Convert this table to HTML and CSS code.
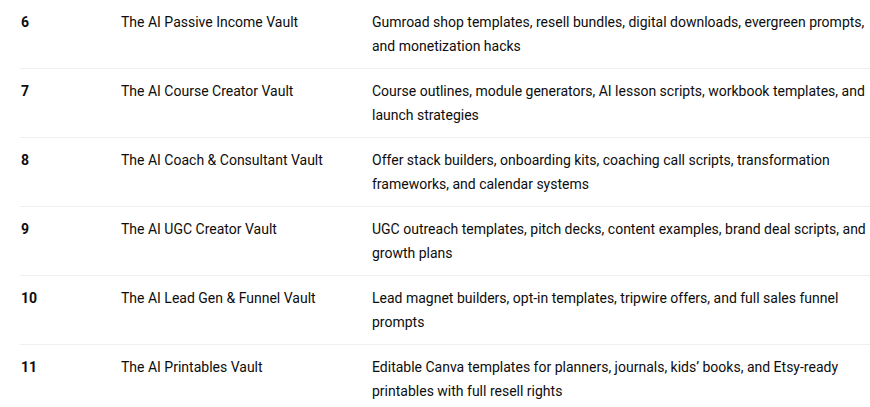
FILE: index.html
```html
<!DOCTYPE html>
<html lang="en">
<head>
<meta charset="utf-8">
<title>AI Vaults</title>
<link rel="stylesheet" href="styles.css">
</head>
<body>
<div class="wrap">
  <table class="vaults">
    <colgroup>
      <col class="c-num"><col class="c-name"><col class="c-desc">
    </colgroup>
    <tbody>
      <tr>
        <td class="num">6</td>
        <td>The AI Passive Income Vault</td>
        <td>Gumroad shop templates, resell bundles, digital downloads, evergreen prompts, and monetization hacks</td>
      </tr>
      <tr>
        <td class="num">7</td>
        <td>The AI Course Creator Vault</td>
        <td>Course outlines, module generators, AI lesson scripts, workbook templates, and launch strategies</td>
      </tr>
      <tr>
        <td class="num">8</td>
        <td>The AI Coach &amp; Consultant Vault</td>
        <td>Offer stack builders, onboarding kits, coaching call scripts, transformation frameworks, and calendar systems</td>
      </tr>
      <tr>
        <td class="num">9</td>
        <td>The AI UGC Creator Vault</td>
        <td>UGC outreach templates, pitch decks, content examples, brand deal scripts, and growth plans</td>
      </tr>
      <tr>
        <td class="num">10</td>
        <td>The AI Lead Gen &amp; Funnel Vault</td>
        <td>Lead magnet builders, opt-in templates, tripwire offers, and full sales funnel prompts</td>
      </tr>
      <tr>
        <td class="num">11</td>
        <td>The AI Printables Vault</td>
        <td>Editable Canva templates for planners, journals, kids’ books, and Etsy-ready printables with full resell rights</td>
      </tr>
    </tbody>
  </table>
</div>
</body>
</html>
```
FILE: styles.css
```css
html, body {
  margin: 0;
  padding: 0;
  background: #ffffff;
}
body {
  font-family: Roboto, "Noto Sans", sans-serif;
  font-size: 14px;
  line-height: 24px;
  color: #0d0d0d;
  overflow: hidden;
}
.wrap {
  padding-left: 20px;
}
.vaults {
  border-collapse: collapse;
  table-layout: fixed;
  width: 850px;
}
.c-num { width: 100px; }
.c-name { width: 251px; }
.vaults td {
  padding: 10px 0 10px 1px;
  vertical-align: top;
  border-bottom: 1px solid #efefef;
}
.vaults tr:last-child td {
  border-bottom: none;
}
.vaults td.num {
  font-weight: 700;
}
```
